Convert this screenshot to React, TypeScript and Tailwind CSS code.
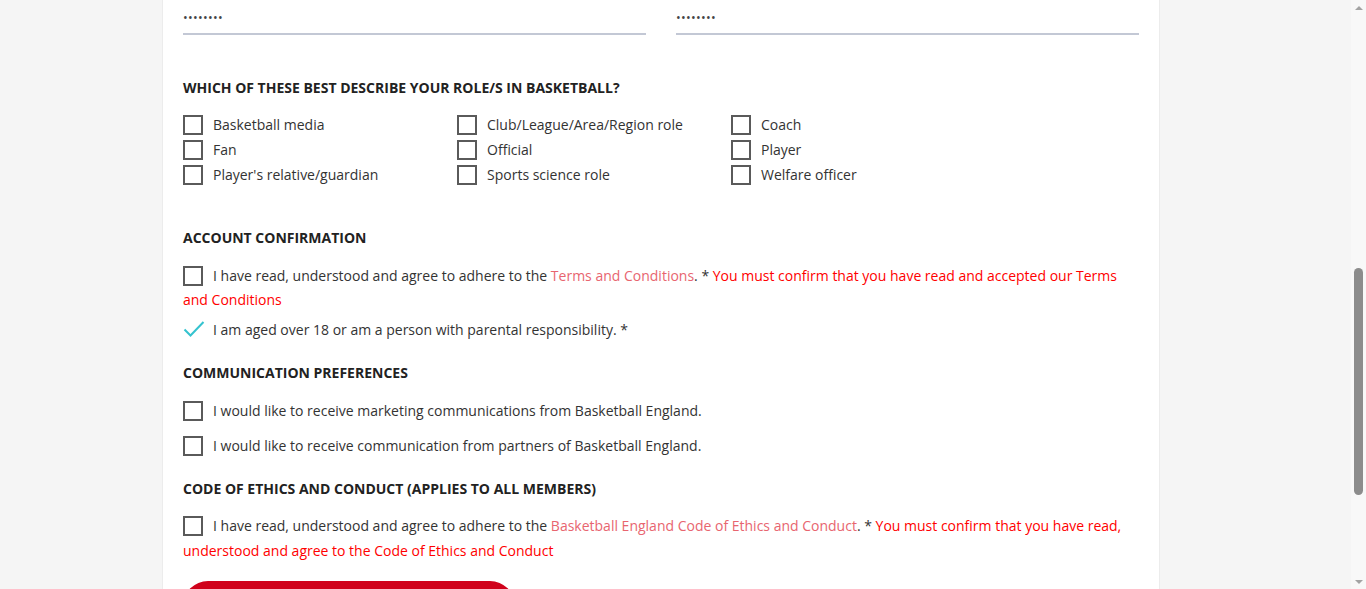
import React from "react";

const roles = [
  ["Basketball media", "Club/League/Area/Region role", "Coach"],
  ["Fan", "Official", "Player"],
  ["Player's relative/guardian", "Sports science role", "Welfare officer"],
];

function Box() {
  return (
    <span className="inline-block w-5 h-5 border-2 border-[#5a5a5a] bg-white align-middle mr-[10px] relative -top-[1px]" />
  );
}

function Tick() {
  return (
    <svg className="inline-block align-middle mr-[8px] relative -top-[2px]" width="22" height="18" viewBox="0 0 22 18">
      <polyline points="1.5,9.5 7.5,15.5 20.5,2" fill="none" stroke="#35c3cf" strokeWidth="2" />
    </svg>
  );
}

function Heading({ children, className = "" }: { children: React.ReactNode; className?: string }) {
  return (
    <h2 className={"text-[14px] leading-[20px] font-bold uppercase text-[#222] " + className}>{children}</h2>
  );
}

export default function App() {
  return (
    <div
      className="flex h-[589px] w-[1366px] overflow-hidden bg-[#f5f5f5] text-[14px] text-[#333]"
      style={{ fontFamily: '"Open Sans", "Liberation Sans", sans-serif' }}
    >
      <div className="flex-1">
        <div className="ml-[162px] w-[998px] h-full bg-white border-x border-[#ececec] px-[20px]">
          {/* password fields */}
          <div className="flex gap-[30px]">
            {[0, 1].map((i) => (
              <div key={i} className="flex-1 pt-[6px] pb-[3px] border-b-2 border-[#c3c8d5] leading-[24px] text-[#444] tracking-[0.3px] text-[12.5px]">
                ••••••••
              </div>
            ))}
          </div>

          <Heading className="mt-[43px]">Which of these best describe your role/s in basketball?</Heading>
          <div className="mt-[14px]">
            {roles.map((row, r) => (
              <div key={r} className="flex h-[25px] items-center">
                {row.map((label) => (
                  <div key={label} className="w-[274px] flex items-center">
                    <span className="inline-block w-5 h-5 border-2 border-[#5a5a5a] mr-[10px]" />
                    <span className="leading-[20px]">{label}</span>
                  </div>
                ))}
              </div>
            ))}
          </div>

          <Heading className="mt-[41px]">Account confirmation</Heading>
          <p className="mt-[16px] leading-[24px]">
            <Box />I have read, understood and agree to adhere to the{" "}
            <span className="text-[#e8656f]">Terms and Conditions</span>. *{" "}
            <span className="text-[#ff0000]">You must confirm that you have read and accepted our Terms and Conditions</span>
          </p>
          <p className="mt-[6px] leading-[24px]">
            <Tick />I am aged over 18 or am a person with parental responsibility. *
          </p>

          <Heading className="mt-[21px]">Communication preferences</Heading>
          <p className="mt-[16px] leading-[24px]">
            <Box />I would like to receive marketing communications from Basketball England.
          </p>
          <p className="mt-[11px] leading-[24px]">
            <Box />I would like to receive communication from partners of Basketball England.
          </p>

          <Heading className="mt-[21px]">Code of ethics and conduct (applies to all members)</Heading>
          <p className="mt-[14px] leading-[25px]">
            <Box />I have read, understood and agree to adhere to the{" "}
            <span className="text-[#e8656f]">Basketball England Code of Ethics and Conduct</span>. *{" "}
            <span className="text-[#ff0000]">You must confirm that you have read, understood and agree to the Code of Ethics and Conduct</span>
          </p>

          <button className="mt-[18px] w-[332px] h-[50px] rounded-full bg-[#d0021b]" />
        </div>
      </div>

      {/* scrollbar */}
      <div className="w-[15px] h-full bg-[#f8f8f8] flex flex-col items-center">
        <div className="h-[15px] flex items-center justify-center">
          <span className="w-0 h-0 border-x-[4px] border-x-transparent border-b-[4px] border-b-[#a3a3a3]" />
        </div>
        <div className="flex-1 w-full flex flex-col items-center">
          <div className="mt-[253px] w-[9px] h-[227px] rounded-full bg-[#8c8c8c]" />
        </div>
        <div className="h-[15px] flex items-center justify-center">
          <span className="w-0 h-0 border-x-[4px] border-x-transparent border-t-[4px] border-t-[#a3a3a3]" />
        </div>
      </div>
    </div>
  );
}
